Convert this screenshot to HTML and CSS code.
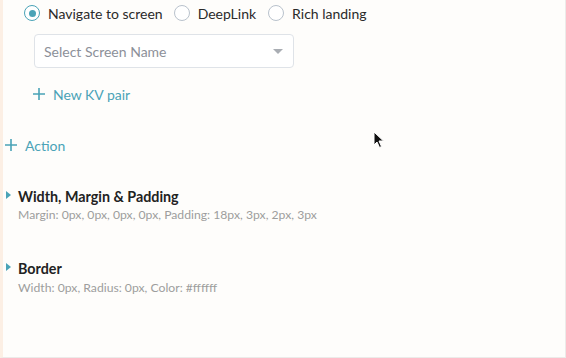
FILE: index.html
```html
<!DOCTYPE html>
<html>
<head>
<meta charset="utf-8">
<link rel="stylesheet" href="styles.css">
</head>
<body>
<div class="panel">
  <div class="radios">
    <label class="radio"><span class="dot checked"></span><span>Navigate to screen</span></label>
    <label class="radio"><span class="dot"></span><span>DeepLink</span></label>
    <label class="radio"><span class="dot"></span><span>Rich landing</span></label>
  </div>
  <div class="select">
    <span class="placeholder">Select Screen Name</span>
    <span class="caret"></span>
  </div>
  <div class="link kv"><svg class="plus" width="12" height="12" viewBox="0 0 12 12"><path d="M6 0 V12 M0 6 H12" stroke="currentColor" stroke-width="1.6"/></svg>New KV pair</div>
  <div class="link action"><svg class="plus" width="12" height="12" viewBox="0 0 12 12"><path d="M6 0 V12 M0 6 H12" stroke="currentColor" stroke-width="1.6"/></svg>Action</div>
  <div class="section first">
    <div class="sec-title"><span class="tri"></span>Width, Margin &amp; Padding</div>
    <div class="sec-sub">Margin: 0px, 0px, 0px, 0px, Padding: 18px, 3px, 2px, 3px</div>
  </div>
  <div class="section second">
    <div class="sec-title"><span class="tri"></span>Border</div>
    <div class="sec-sub">Width: 0px, Radius: 0px, Color: #ffffff</div>
  </div>
  <svg class="cursor" width="12" height="18" viewBox="0 0 12 18"><path d="M1 1 L1 14 L4 11 L6.5 16.5 L8.5 15.5 L6 10 L10.5 10 Z" fill="#111" stroke="#fff" stroke-width="1"/></svg>
</div>
</body>
</html>
```
FILE: styles.css
```css
* { box-sizing: border-box; }
html, body { margin: 0; padding: 0; }
body {
  width: 566px;
  height: 358px;
  background: #fdfcfa;
  font-family: Lato, "Open Sans", sans-serif;
  overflow: hidden;
}
.panel {
  position: relative;
  width: 566px;
  height: 358px;
  border-left: 3px solid #fcefe4;
  border-right: 1px solid #ecebe9;
  border-bottom: 1px solid #ecebe9;
  background: #fefdfb;
  padding: 4px 0 0 0;
}
.radios {
  display: flex;
  align-items: center;
  padding-left: 21px;
  height: 18px;
}
.radio {
  display: flex;
  align-items: center;
  font-size: 14px;
  color: #2a2a2a;
  margin-right: 10px;
}
.radio:nth-child(2) { margin-left: 1px; margin-right: 12px; }
.dot {
  width: 16px;
  height: 16px;
  border: 1px solid #b9c2cc;
  border-radius: 50%;
  margin-right: 8px;
  background: #fff;
  position: relative;
}
.dot.checked { border-color: #4aa3b7; }
.dot.checked::after {
  content: "";
  position: absolute;
  left: 3.5px; top: 3.5px;
  width: 7px; height: 7px;
  border-radius: 50%;
  background: #4aa3b7;
}
.select {
  margin: 12px 0 0 31px;
  width: 260px;
  height: 34px;
  border: 1px solid #dfe3e8;
  border-radius: 4px;
  background: #fff;
  display: flex;
  align-items: center;
  justify-content: space-between;
  padding: 0 10px 0 9px;
}
.placeholder { font-size: 14px; color: #8c9099; }
.caret {
  width: 0; height: 0;
  border-left: 5px solid transparent;
  border-right: 5px solid transparent;
  border-top: 5px solid #a9adb3;
}
.link {
  display: flex;
  align-items: center;
  color: #4aa3b7;
  font-size: 14px;
}
.plus { margin-right: 8px; }
.kv { margin: 16px 0 0 30px; height: 20px; }
.action { margin: 31px 0 0 2px; height: 20px; }
.section { padding-left: 15px; }
.section.first { margin-top: 32px; }
.section.second { margin-top: 37px; }
.sec-title {
  position: relative;
  font-size: 14.3px;
  font-weight: 700;
  color: #222;
  height: 18px;
  display: flex;
  align-items: center;
}
.tri {
  position: absolute;
  left: -12px;
  top: 4px;
  width: 0; height: 0;
  border-top: 4px solid transparent;
  border-bottom: 4px solid transparent;
  border-left: 5px solid #4aa3b7;
}
.sec-sub {
  font-size: 12.2px;
  color: #9d9d9d;
  margin-top: 2px;
}
.second .sec-sub { margin-top: 3px; }
.cursor {
  position: absolute;
  left: 370px;
  top: 131px;
}
```
